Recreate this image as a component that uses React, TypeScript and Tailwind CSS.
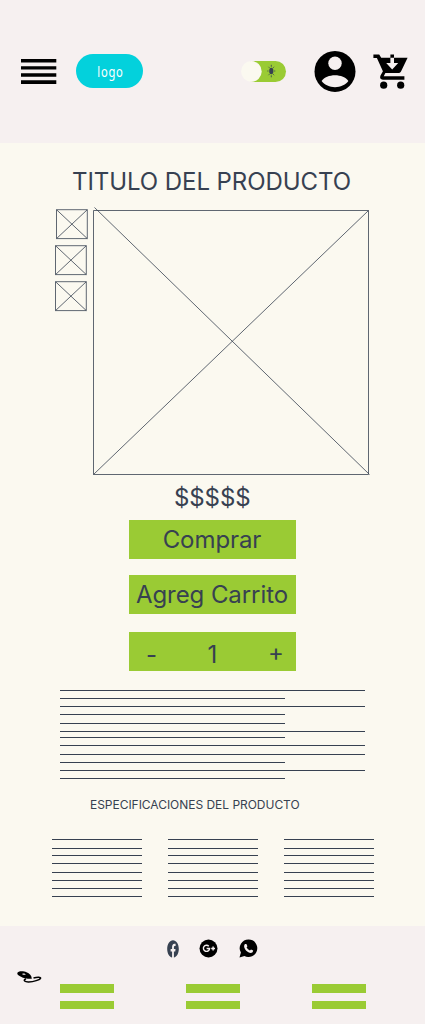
import { FaFacebook } from "react-icons/fa";

const paragraph = [
  { gap: "mt-0", wide: true },
  { gap: "mt-[7px]", wide: false },
  { gap: "mt-[7px]", wide: true },
  { gap: "mt-[7px]", wide: false },
  { gap: "mt-[8px]", wide: false },
  { gap: "mt-[7px]", wide: true },
  { gap: "mt-[5px]", wide: false },
  { gap: "mt-[7px]", wide: true },
  { gap: "mt-[8px]", wide: true },
  { gap: "mt-[7px]", wide: false },
  { gap: "mt-[7px]", wide: true },
  { gap: "mt-[7px]", wide: false },
];

const specGaps = ["mt-0", "mt-[8px]", "mt-[6px]", "mt-[7px]", "mt-[8px]", "mt-[7px]", "mt-[7px]", "mt-[7px]"];

function Thumb({ className }: { className: string }) {
  return (
    <svg className={className} width="32" height="31" viewBox="0 0 32 31" fill="none" stroke="#374151" strokeWidth="0.8">
      <path d="M.5 .7H31.3V29.6H.5ZM.5 .7L31.3 29.6M31.3 .7L.5 29.6" />
    </svg>
  );
}

function MenuIcon() {
  return (
    <svg width="36" height="26" viewBox="0 0 36 26">
      <path d="M0 0H35.3V3.4H0ZM0 7.2H35.3V10.6H0ZM0 14.2H35.3V17.7H0ZM0 21.3H35.3V25H0Z" />
    </svg>
  );
}

function ThemeToggle() {
  return (
    <svg width="46" height="22" viewBox="0 0 46 22">
      <rect x="3" y="1" width="42" height="21" rx="10.5" fill="#9acb34" />
      <circle cx="10.4" cy="11.4" r="10.3" fill="#fbf9f0" />
      <ellipse cx="30.3" cy="11" rx="2.1" ry="3.3" fill="#374151" />
      <g stroke="#374151" strokeWidth="0.8">
        <path d="M30.3 4.8v2M30.3 15.3v2M26.3 11h1.2M33.1 11h1.2M27.5 6.8l.9 1M33.1 6.8l-.9 1M27.5 15.2l.9-1M33.1 15.2l-.9-1" />
      </g>
    </svg>
  );
}

function AccountIcon() {
  return (
    <svg width="42" height="42" viewBox="0 0 42 42">
      <circle cx="21" cy="21.4" r="20.5" />
      <circle cx="21" cy="13.2" r="6.7" fill="#f6f0f0" />
      <path d="M7.6 31C10 27.4 15.5 25.3 21 25.3S32 27.4 34.4 31C31.2 35 26.4 37.2 21 37.2S10.8 35 7.6 31Z" fill="#f6f0f0" />
    </svg>
  );
}

function CartIcon() {
  return (
    <svg width="36" height="36" viewBox="0 0 36 36">
      <g transform="translate(.4 0)">
        <path d="M0 .5H5.8L7.8 3.8H17V.5H20.6V3.8H34.2L27.6 17.5Q26.8 19 25 19H12L10.3 22.2H31V25.7H9.5C7 25.7 6.2 23.8 7 21.8L9.5 17.3L3.5 4H0Z" />
        <path d="M17 3.8H20.6V9H24.8L18.8 15.5L12.8 9H17Z" fill="#f6f0f0" />
        <circle cx="10.3" cy="31.2" r="3.6" />
        <circle cx="27.3" cy="31.2" r="3.6" />
      </g>
    </svg>
  );
}

function GooglePlus() {
  return (
    <svg width="19" height="19" viewBox="0 0 19 19">
      <circle cx="9.5" cy="9.5" r="9" />
      <path d="M9.8 7.2A3.1 3.1 0 1 0 10.6 9.5H7.6M12.2 9.5H16M14.1 7.6V11.4" fill="none" stroke="#f6f0f0" strokeWidth="1.4" />
    </svg>
  );
}

function WhatsApp() {
  return (
    <svg width="19" height="19" viewBox="0 0 19 19">
      <path d="M9.7.4A8.8 8.8 0 1 1 5.4 17L.5 18.4 1.9 13.6A8.8 8.8 0 0 1 9.7.4Z" />
      <path d="M6 5.1L7.4 5 8.4 7.3 7.6 8.5Q8.7 10.7 10.9 11.6L12 10.5 14.2 11.6Q14.1 13.8 12 13.9C8.4 13.7 5.3 10.3 5.1 7.2Q5.1 5.8 6 5.1Z" fill="#f6f0f0" />
    </svg>
  );
}

function BrandMark() {
  return (
    <svg width="25" height="12" viewBox="0 0 25 12">
      <path fillRule="evenodd" d="M.3 2.2C.8-.2 6.5-.2 9.5 1.2C12.5 2.5 14.8 4.5 14.8 7.8C10.5 7.9 6.5 7.5 4 5.8C2 4.6.1 3.6.3 2.2ZM5.2 2.9C5.6 3.7 7.2 4 8.7 3.8C8.4 2.9 6.6 2.2 5.2 2.9Z" />
      <path d="M9 7.8C5.5 9.4 7.8 11 11.7 10.9C17 10.8 22.5 8.8 23.5 7.5C24.4 5.8 20 6 16.5 7" fill="none" stroke="black" strokeWidth="1.5" />
    </svg>
  );
}

function FooterBars() {
  return (
    <div className="flex w-[54px] flex-col gap-2">
      <div className="h-[9px] bg-[#9acb34]" />
      <div className="h-2 bg-[#9acb34]" />
    </div>
  );
}

export default function App() {
  return (
    <div className="flex h-[1024px] w-[425px] flex-col overflow-hidden bg-[#fbf9f0] font-['Inter',sans-serif] text-[#374151]">
      <header className="flex h-[143px] shrink-0 items-start bg-[#f6f0f0] pl-[21px]">
        <div className="mt-[59px]"><MenuIcon /></div>
        <div className="mt-[54px] ml-[19px] flex h-[34px] w-[67px] items-center justify-center rounded-full bg-[#03d1dc] font-['Noto_Sans',sans-serif] text-[14px] tracking-[0.9px] text-white">
          <span className="ml-px scale-x-[.8]">logo</span>
        </div>
        <div className="mt-[60px] ml-[98px]"><ThemeToggle /></div>
        <div className="mt-[50px] ml-[27px]"><AccountIcon /></div>
        <div className="mt-[54px] ml-[17px]"><CartIcon /></div>
      </header>

      <main className="flex h-[783px] shrink-0 flex-col">
        <h1 className="mt-[24px] ml-[72px] h-[29px] text-[24px] leading-[29px] tracking-[-0.07px] whitespace-nowrap">TITULO DEL PRODUCTO</h1>
        <div className="mt-[11px] flex h-[270px] pl-[55px]">
          <div className="flex w-[33px] flex-col pt-[2px]">
            <Thumb className="ml-px" />
            <Thumb className="mt-[5px]" />
            <Thumb className="mt-[5px]" />
          </div>
          <svg className="ml-[5px]" width="278" height="269" viewBox="0 0 278 269" fill="none" stroke="#374151" strokeWidth="0.8">
            <path d="M.5 3.5H275.5V267.5H.5ZM1.5 .5L276.5 267.5M275.5 3.5L.5 267.5" />
          </svg>
        </div>
        <div className="mt-[6px] h-[29px] pl-[174px] text-[24px] leading-[29px] tracking-[-0.1px]">$$$$$</div>
        <button className="mt-[8px] ml-[129px] h-[39px] w-[167px] shrink-0 bg-[#9acb34] pr-px text-center text-[24px] leading-[39px] tracking-[-0.07px]">Comprar</button>
        <button className="mt-4 ml-[129px] h-[39px] w-[167px] shrink-0 bg-[#9acb34] pr-px text-center text-[24px] leading-[39px] tracking-[-0.07px] whitespace-nowrap">Agreg Carrito</button>
        <div className="mt-[18px] ml-[129px] flex h-[39px] w-[167px] shrink-0 bg-[#9acb34] text-[24px] leading-[39px]">
          <span className="w-[60px] pt-[3px] pl-[17px]">-</span>
          <span className="w-[47px] pt-[3px] text-center">1</span>
          <span className="w-[60px] pt-px pl-[32px]">+</span>
        </div>
        <div className="mt-[19px] ml-[60px] flex w-[305px] flex-col">
          {paragraph.map((line, i) => (
            <div key={i} className={`h-px bg-[#374151] ${line.gap} ${line.wide ? "w-[305px]" : "w-[225px]"}`} />
          ))}
        </div>
        <h2 className="mt-[18px] ml-[90px] h-[15px] text-[12px] leading-[15px] tracking-[-0.03px] whitespace-nowrap">ESPECIFICACIONES DEL PRODUCTO</h2>
        <div className="mt-[27px] ml-[52px] flex gap-[26px]">
          {[0, 1, 2].map((column) => (
            <div key={column} className="flex w-[90px] flex-col">
              {specGaps.map((gap, i) => (
                <div key={i} className={`h-px bg-[#374151] ${gap}`} />
              ))}
            </div>
          ))}
        </div>
      </main>

      <footer className="flex flex-1 flex-col bg-[#f6f0f0]">
        <div className="mt-[13px] flex h-[19px] items-center pl-[167px] text-black">
          <FaFacebook className="h-[18px] w-[12px] text-[#374151]" preserveAspectRatio="none" />
          <div className="ml-5"><GooglePlus /></div>
          <div className="ml-[21px]"><WhatsApp /></div>
        </div>
        <div className="mt-[13px] flex items-start pl-[17px]">
          <BrandMark />
          <div className="mt-[13px] ml-[18px] flex gap-[72px]">
            <FooterBars />
            <FooterBars />
            <FooterBars />
          </div>
        </div>
      </footer>
    </div>
  );
}
